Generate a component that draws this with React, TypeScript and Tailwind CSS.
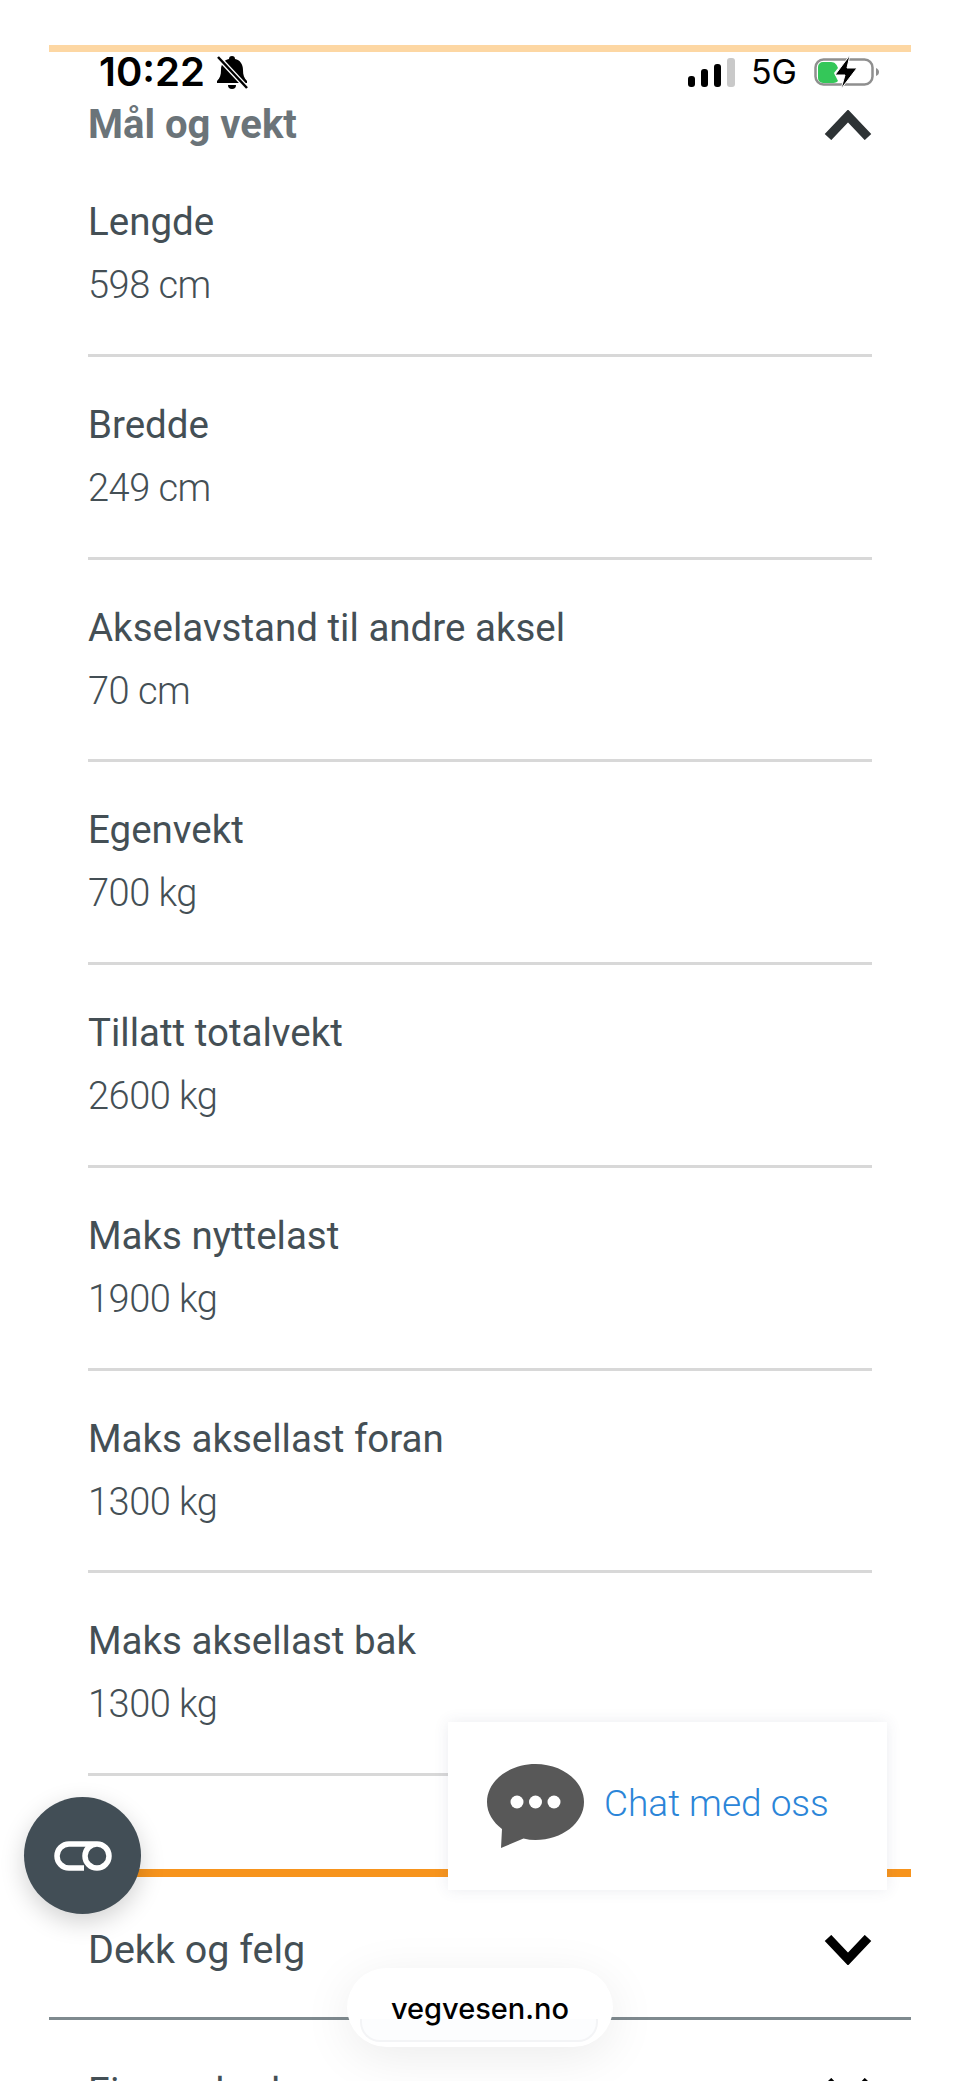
import React from 'react';

const rows = [
    { label: 'Lengde', value: '598 cm' },
    { label: 'Bredde', value: '249 cm' },
    { label: 'Akselavstand til andre aksel', value: '70 cm' },
    { label: 'Egenvekt', value: '700 kg' },
    { label: 'Tillatt totalvekt', value: '2600 kg' },
    { label: 'Maks nyttelast', value: '1900 kg' },
    { label: 'Maks aksellast foran', value: '1300 kg' },
    { label: 'Maks aksellast bak', value: '1300 kg' },
];

const Chevron = ({ up, className }: { up?: boolean; className: string }) => (
    <svg viewBox="0 0 48 30" className={className}>
        <path
            d={up ? 'M4 27 L24 6 L44 27' : 'M4 3 L24 24 L44 3'}
            fill="none"
            stroke="currentColor"
            strokeWidth="9"
            strokeLinejoin="miter"
        />
    </svg>
);

const StatusBar = () => (
    <div className="absolute left-[99px] right-[80px] top-[52px] flex h-[40px] items-center justify-between text-black">
        <div className="flex items-center gap-[11px]">
            <span className="text-[40px] leading-[40px] font-semibold [font-family:Inter,sans-serif]">10:22</span>
            <svg viewBox="0 0 32 36" className="h-[36px] w-[32px]">
                <path d="M16 2c-2 0-3 1-3 3-5 1-8 5-8 11 0 5-1 8-4 11v2h30v-2c-3-3-4-6-4-11 0-6-3-10-8-11 0-2-1-3-3-3z" fill="currentColor" />
                <path d="M12 31h8a4 4 0 0 1-8 0z" fill="currentColor" />
                <path d="M2 3 L31 34" stroke="white" strokeWidth="5" />
                <path d="M2 3 L31 34" stroke="currentColor" strokeWidth="2.500" />
            </svg>
        </div>
        <div className="flex items-center">
            <div className="mr-[16px] flex items-end gap-[6px]">
                <span className="h-[11px] w-[7px] rounded-[3px] bg-black" />
                <span className="h-[18px] w-[7px] rounded-[3px] bg-black" />
                <span className="h-[23px] w-[7px] rounded-[3px] bg-black" />
                <span className="h-[29px] w-[8px] rounded-[3px] bg-[#c9c9c9]" />
            </div>
            <span className="mr-[17px] text-[34px] leading-[40px] font-normal [font-family:Inter,sans-serif]">5G</span>
            <svg viewBox="0 0 66 34" className="h-[34px] w-[66px]">
                <rect x="1.500" y="4.500" width="57" height="25" rx="8" fill="none" stroke="#8f8f8f" strokeWidth="2.500" />
                <path d="M4 12a5 5 0 0 1 5-5h8c4 0 6 3 7 6l-4 5 4 8c-2 2-4 2-7 2H9a5 5 0 0 1-5-5z" fill="#34c759" />
                <path d="M36 0 L21 20 L31 20 L27 34 L43 13 L33 13 Z" fill="#000" stroke="#fff" strokeWidth="1" />
                <path d="M62 13c2 1 3 2 3 4s-1 3-3 4z" fill="#8f8f8f" />
            </svg>
        </div>
    </div>
);

const App = () => {
    return (
        <div className="relative h-[2081px] w-[960px] overflow-hidden bg-white [font-family:Roboto,sans-serif]">
            <div className="px-[49px] pt-[45px]">
                <div className="h-[7px] bg-[#fdd7a3]" />
                <div className="px-[39px]">
                    <div className="flex h-[102px] items-start justify-between pt-[50px] text-[#2e3335]">
                        <span className="text-[40px] leading-[46px] font-bold text-[#6b7479]">Mål og vekt</span>
                        <Chevron up className="mt-[8px] h-[30px] w-[48px]" />
                    </div>
                    {rows.map((row) => (
                        <div key={row.label} className="flex h-[202.750px] flex-col border-b-[3px] border-[#d8d8d8] pt-[45px] text-[#444f55]">
                            <span className="text-[38.500px] leading-[46px]">{row.label}</span>
                            <span className="mt-[17px] text-[38px] leading-[46px] font-light tracking-[-0.5px]">{row.value}</span>
                        </div>
                    ))}
                </div>
                <div className="mt-[93px] h-[8px] bg-[#f7941d]" />
                <div className="flex h-[143px] items-center justify-between border-b-[3px] border-[#7f8a8f] px-[39px]">
                    <span className="pt-[5px] text-[39.500px] text-[#444f55]">Dekk og felg</span>
                    <Chevron className="mt-[5px] h-[30px] w-[48px] text-black" />
                </div>
                <div className="flex items-start justify-between px-[39px] pt-[49px]">
                    <span className="text-[38.500px] leading-[46px] text-[#444f55]">Eier og bruker</span>
                    <Chevron className="mt-[9px] h-[30px] w-[48px] text-black" />
                </div>
            </div>

            <StatusBar />

            {/* floating accessibility button */}
            <div className="absolute left-[24px] top-[1797px] flex h-[117px] w-[117px] items-center justify-center rounded-full bg-[#424e56] shadow-[0_8px_24px_rgba(0,0,0,0.18)]">
                <svg viewBox="0 0 60 30" className="h-[30px] w-[60px]">
                    <path d="M31 27 H16 a12 12 0 0 1 0 -24 H44 a12 12 0 0 1 0 24 a12 12 0 0 1 0 -24" fill="none" stroke="#fff" strokeWidth="5.500" />
                </svg>
            </div>

            {/* chat card */}
            <div className="absolute left-[448px] top-[1722px] flex h-[168px] w-[439px] items-center bg-white pl-[39px] shadow-[0_0_14px_rgba(60,70,110,0.1)]">
                <svg viewBox="0 0 97 84" className="h-[84px] w-[97px]">
                    <path d="M48.500 0C75 0 97 17 97 38c0 21-22 38-48.500 38-4 0-8-.5-12-1.500L14 84l1-19C6 58 0 49 0 38 0 17 22 0 48.500 0z" fill="#585858" />
                    <circle cx="30" cy="38" r="6.500" fill="#fff" />
                    <circle cx="48.500" cy="38" r="6.500" fill="#fff" />
                    <circle cx="67" cy="38" r="6.500" fill="#fff" />
                </svg>
                <span className="mb-[4px] ml-[20px] text-[37px] leading-[46px] font-light text-[#2b85d8]">Chat med oss</span>
            </div>

            {/* browser url pill */}
            <div className="absolute left-[347px] top-[1968px] h-[79px] w-[266px] rounded-[40px] bg-white shadow-[0_10px_50px_rgba(0,0,0,0.08)]">
                <div className="absolute bottom-[5px] left-[13px] right-[15px] h-[23px] rounded-b-[20px] border-2 border-t-0 border-[#f3f4f6] bg-[#fcfdfe]" />
                <span className="relative block pt-[23px] text-center text-[29px] leading-[36px] font-medium text-black [font-family:Inter,sans-serif]">vegvesen.no</span>
            </div>
        </div>
    );
};

export default App;
